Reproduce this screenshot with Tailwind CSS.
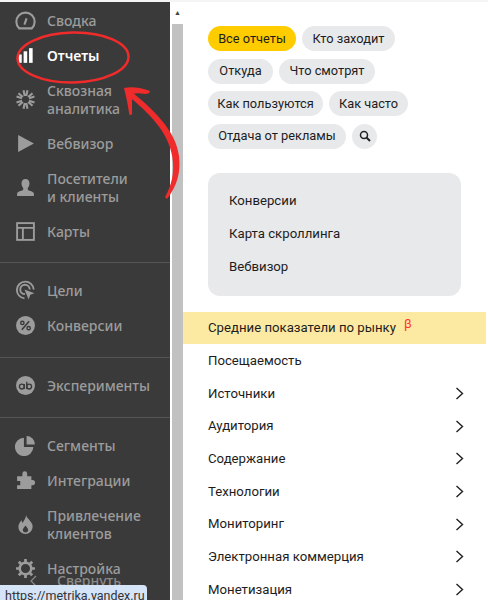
<!DOCTYPE html>
<html lang="ru">
<head>
<meta charset="UTF-8">
<title>Отчеты</title>
<script src="https://cdn.jsdelivr.net/npm/@tailwindcss/browser@4"></script>
</head>
<body class="bg-white">
<div class="relative w-[488px] h-[600px] overflow-hidden flex font-['Roboto',sans-serif] border-t-2 border-[#f4f4f4]">

  <!-- sidebar -->
  <aside class="w-[170px] h-full shrink-0 bg-[#3a3a3a] text-[#9c9c9c] text-[14px] leading-[18px] font-['Noto_Sans',sans-serif] font-medium pt-[1px]">
    <div class="flex items-center h-[35px] pl-[15px] gap-[11px]">
      <svg class="w-[21px] h-[21px]" viewBox="0 0 20 20" fill="none" stroke="#9c9c9c" stroke-width="2"><path d="M4 17.500a8.700 8.700 0 1 1 12 0z"/><path d="M9 14l2-6"/></svg>
      <span>Сводка</span>
    </div>
    <div class="flex items-center h-[35px] pl-[15px] gap-[11px] text-white font-semibold">
      <svg class="w-[21px] h-[21px]" viewBox="0 0 20 20" fill="#fff"><rect x="3" y="9" width="3.400" height="8"/><rect x="8.200" y="6" width="3.400" height="11"/><rect x="13.400" y="3" width="3.400" height="14"/></svg>
      <span>Отчеты</span>
    </div>
    <div class="flex items-center h-[53px] pl-[15px] gap-[11px]">
      <svg class="w-[21px] h-[21px]" viewBox="0 0 20 20" fill="none" stroke="#9c9c9c" stroke-width="2"><path d="M10.730 6.580L11.870 1.200M9.270 6.580L8.130 1.200M13.330 8.920L18.560 7.220M12.600 7.660L16.690 3.980M7.400 7.660L3.310 3.980M6.670 8.920L1.440 7.220M10.730 13.420L11.870 18.800M9.270 13.420L8.130 18.800M13.330 11.080L18.560 12.780M12.600 12.340L16.690 16.020M7.400 12.340L3.310 16.020M6.670 11.080L1.440 12.780"/></svg>
      <span>Сквозная<br>аналитика</span>
    </div>
    <div class="flex items-center h-[35px] pl-[15px] gap-[11px]">
      <svg class="w-[21px] h-[21px]" viewBox="0 0 20 20" fill="#9c9c9c"><path d="M3 2l15 8-15 8z"/></svg>
      <span>Вебвизор</span>
    </div>
    <div class="flex items-center h-[53px] pl-[15px] gap-[11px]">
      <svg class="w-[21px] h-[21px]" viewBox="0 0 20 20" fill="#9c9c9c"><path d="M10 2c2.500 0 3.800 1.800 3.800 4.300 0 1.700-.7 3.300-1.600 4.200v1.800c1.800.8 5.300 1.500 5.800 3.200V18H2v-2.500c.5-1.700 4-2.400 5.800-3.200v-1.800C6.900 9.600 6.200 8 6.200 6.300 6.200 3.800 7.500 2 10 2z"/></svg>
      <span>Посетители<br>и клиенты</span>
    </div>
    <div class="flex items-center h-[35px] pl-[15px] gap-[11px]">
      <svg class="w-[21px] h-[21px]" viewBox="0 0 20 20" fill="none" stroke="#9c9c9c" stroke-width="1.800"><rect x="2" y="2" width="16" height="16"/><path d="M2 6.500h16M7.500 6.500V18"/></svg>
      <span>Карты</span>
    </div>
    <div class="mt-[13px] mb-[10px] h-[1px] bg-[#555]"></div>
    <div class="flex items-center h-[35px] pl-[15px] gap-[11px]">
      <svg class="w-[21px] h-[21px]" viewBox="0 0 20 20" fill="none" stroke="#9c9c9c" stroke-width="1.800"><path d="M9 17.500A8 8 0 1 1 17.800 9"/><path d="M9.500 13.500A4.500 4.500 0 1 1 14 9"/><path d="M9 9l9.500 3.500-4 1.500-1.500 4.500z" fill="#9c9c9c" stroke="none"/></svg>
      <span>Цели</span>
    </div>
    <div class="flex items-center h-[35px] pl-[15px] gap-[11px]">
      <svg class="w-[21px] h-[21px]" viewBox="0 0 20 20"><circle cx="10" cy="10" r="9" fill="#9c9c9c"/><path d="M6.500 14L13.500 6" stroke="#3a3a3a" stroke-width="1.500"/><circle cx="7" cy="7.500" r="1.600" fill="none" stroke="#3a3a3a" stroke-width="1.300"/><circle cx="13" cy="12.500" r="1.600" fill="none" stroke="#3a3a3a" stroke-width="1.300"/></svg>
      <span>Конверсии</span>
    </div>
    <div class="mt-[14px] mb-[10px] h-[1px] bg-[#555]"></div>
    <div class="flex items-center h-[35px] pl-[15px] gap-[11px]">
      <svg class="w-[21px] h-[21px]" viewBox="0 0 20 20"><circle cx="10" cy="10" r="9" fill="#9c9c9c"/><circle cx="6.500" cy="11" r="2.300" fill="none" stroke="#3a3a3a" stroke-width="1.300"/><path d="M8.800 8.500V13.300" stroke="#3a3a3a" stroke-width="1.300"/><circle cx="13.500" cy="11" r="2.300" fill="none" stroke="#3a3a3a" stroke-width="1.300"/><path d="M11.200 6.500V13.300" stroke="#3a3a3a" stroke-width="1.300"/></svg>
      <span>Эксперименты</span>
    </div>
    <div class="mt-[14px] mb-[10px] h-[1px] bg-[#555]"></div>
    <div class="flex items-center h-[35px] pl-[15px] gap-[11px]">
      <svg class="w-[21px] h-[21px]" viewBox="0 0 20 20" fill="#9c9c9c"><path d="M8.500 2.500v9h9A8.800 8.800 0 1 1 8.500 2.500z"/><path d="M11 1a8 8 0 0 1 8 8h-8z"/></svg>
      <span>Сегменты</span>
    </div>
    <div class="flex items-center h-[35px] pl-[15px] gap-[11px]">
      <svg class="w-[21px] h-[21px]" viewBox="0 0 20 20" fill="#9c9c9c"><path d="M2 6h5V3.500a2.300 2.300 0 0 1 4.600 0V6h4v3.500h1a2.500 2.500 0 0 1 0 5h-1V18H2v-3.500h3v-4H2z"/></svg>
      <span>Интеграции</span>
    </div>
    <div class="flex items-center h-[53px] pl-[15px] gap-[11px]">
      <svg class="w-[21px] h-[21px]" viewBox="0 0 20 20" fill="#9c9c9c"><path d="M10.500 1c.5 3 4.500 5 6 9 1.200 4-1.500 9-6.500 9s-7.500-4.500-6.500-8.500c.5-2 1.800-3 2.500-4.500.6 1 .8 2 1.300 2.500C8.500 6 10.500 4 10.500 1zM10 11c-1 1.500-3 3-2.500 5 .4 1 1.500 1.500 2.500 1.500s2.200-.5 2.500-1.500c.4-2-1.500-3.500-2.500-5z"/></svg>
      <span>Привлечение<br>клиентов</span>
    </div>
    <div class="flex items-center h-[35px] pl-[15px] gap-[11px]">
      <svg class="w-[21px] h-[21px]" viewBox="0 0 20 20" fill="none" stroke="#9c9c9c"><circle cx="10" cy="10" r="5.500" stroke-width="2.400"/><path d="M10 1v3M10 16v3M1 10h3M16 10h3M3.600 3.600l2.200 2.200M14.200 14.200l2.200 2.200M16.400 3.600l-2.200 2.200M5.800 14.200l-2.200 2.200" stroke-width="2.600"/></svg>
      <span>Настройка</span>
    </div>
  </aside>

  <!-- scrollbar -->
  <div class="w-[13px] h-full shrink-0 flex flex-col">
    <div class="h-[22px] ml-[2px] flex items-center justify-center text-[7px] text-[#444]">▲</div>
    <div class="flex-1 ml-[2px] mr-0 bg-[#c1c1c1]"></div>
  </div>

  <!-- main column -->
  <main class="flex-1 min-w-0 pt-[24px] text-[#1d1d1d] text-[13.2px] leading-[18px]">
    <div class="pl-[25px] flex flex-col gap-y-[7.670px] text-[12.800px]">
      <div class="flex gap-x-[6px]">
        <span class="w-[88px] h-[25px] flex items-center justify-center rounded-full bg-[#ffcc00] whitespace-nowrap">Все отчеты</span>
        <span class="w-[93px] h-[25px] flex items-center justify-center rounded-full bg-[#e8e9eb] whitespace-nowrap">Кто заходит</span>
      </div>
      <div class="flex gap-x-[6px]">
        <span class="w-[65px] h-[25px] flex items-center justify-center rounded-full bg-[#e8e9eb] whitespace-nowrap">Откуда</span>
        <span class="w-[96px] h-[25px] flex items-center justify-center rounded-full bg-[#e8e9eb] whitespace-nowrap">Что смотрят</span>
      </div>
      <div class="flex gap-x-[6px]">
        <span class="w-[115px] h-[25px] flex items-center justify-center rounded-full bg-[#e8e9eb] whitespace-nowrap">Как пользуются</span>
        <span class="w-[79px] h-[25px] flex items-center justify-center rounded-full bg-[#e8e9eb] whitespace-nowrap">Как часто</span>
      </div>
      <div class="flex gap-x-[6px]">
        <span class="w-[138px] h-[25px] flex items-center justify-center rounded-full bg-[#e8e9eb] whitespace-nowrap">Отдача от рекламы</span>
        <span class="h-[25px] w-[25px] flex items-center justify-center rounded-full bg-[#e8e9eb]">
          <svg class="w-[12px] h-[12px]" viewBox="0 0 12 12" fill="none" stroke="#222" stroke-width="1.500"><circle cx="5" cy="5" r="3.500"/><path d="M7.500 7.500L11 11" stroke-width="2"/></svg>
        </span>
      </div>
    </div>

    <div class="ml-[25px] mt-[24px] w-[253px] h-[123px] rounded-[12px] bg-[#e8e9eb] pl-[21px] pt-[19px] flex flex-col gap-[15px]">
      <span>Конверсии</span>
      <span>Карта скроллинга</span>
      <span>Вебвизор</span>
    </div>

    <div class="mt-[16px] w-[303px] h-[32px] bg-[#fdeaa2] pl-[25px] flex items-center gap-[8px]">
      <span>Средние показатели по рынку</span>
      <span class="text-[#f33] text-[13px] -mt-[8px]">β</span>
    </div>
    <div class="w-[302px] pl-[25px] pr-[21px] mt-[0.5px]">
      <div class="h-[32.700px] flex items-center justify-between"><span>Посещаемость</span></div>
      <div class="h-[32.700px] flex items-center justify-between"><span>Источники</span><svg class="w-[9px] h-[13px]" viewBox="0 0 9 13" fill="none" stroke="#222" stroke-width="1.400"><path d="M1.500 1l6 5.500-6 5.500"/></svg></div>
      <div class="h-[32.700px] flex items-center justify-between"><span>Аудитория</span><svg class="w-[9px] h-[13px]" viewBox="0 0 9 13" fill="none" stroke="#222" stroke-width="1.400"><path d="M1.500 1l6 5.500-6 5.500"/></svg></div>
      <div class="h-[32.700px] flex items-center justify-between"><span>Содержание</span><svg class="w-[9px] h-[13px]" viewBox="0 0 9 13" fill="none" stroke="#222" stroke-width="1.400"><path d="M1.500 1l6 5.500-6 5.500"/></svg></div>
      <div class="h-[32.700px] flex items-center justify-between"><span>Технологии</span><svg class="w-[9px] h-[13px]" viewBox="0 0 9 13" fill="none" stroke="#222" stroke-width="1.400"><path d="M1.500 1l6 5.500-6 5.500"/></svg></div>
      <div class="h-[32.700px] flex items-center justify-between"><span>Мониторинг</span><svg class="w-[9px] h-[13px]" viewBox="0 0 9 13" fill="none" stroke="#222" stroke-width="1.400"><path d="M1.500 1l6 5.500-6 5.500"/></svg></div>
      <div class="h-[32.700px] flex items-center justify-between"><span>Электронная коммерция</span><svg class="w-[9px] h-[13px]" viewBox="0 0 9 13" fill="none" stroke="#222" stroke-width="1.400"><path d="M1.500 1l6 5.500-6 5.500"/></svg></div>
      <div class="h-[32.700px] flex items-center justify-between"><span>Монетизация</span><svg class="w-[9px] h-[13px]" viewBox="0 0 9 13" fill="none" stroke="#222" stroke-width="1.400"><path d="M1.500 1l6 5.500-6 5.500"/></svg></div>
    </div>
  </main>

  <!-- "Свернуть" peeking from under the settings row -->
  <div class="absolute left-[30px] top-[570px] flex items-center gap-[20px] text-[14px] leading-[18px] text-[#8a8a8a] font-['Noto_Sans',sans-serif] font-medium">
    <svg class="w-[7px] h-[12px]" viewBox="0 0 7 12" fill="none" stroke="#8a8a8a" stroke-width="1.200"><path d="M6 1L1 6l5 5"/></svg>
    <span>Свернуть</span>
  </div>

  <!-- browser status tooltip -->
  <div class="absolute left-0 bottom-0 w-[147px] h-[15px] rounded-tr-[4px] bg-[#d6e4f8] text-[#333] text-[12.500px] leading-[14px] pl-[5px] pt-[4px] overflow-hidden whitespace-nowrap">https://metrika.yandex.ru</div>

  <!-- red hand-drawn annotation -->
  <svg class="absolute left-0 -top-[2px] w-[488px] h-[600px] pointer-events-none" viewBox="0 0 488 600" fill="none">
    <ellipse cx="73" cy="57.500" rx="55.500" ry="25" stroke="#f02b2b" stroke-width="2.500" transform="rotate(-1 73 57.500)"/>
    <path d="M167 199C177 186 181 172 179 156C176 130 152 108 128 89L127 95C148 112 169 132 172.500 158C174.500 172 172 185 165 197Z" fill="#f02b2b"/>
    <path d="M124 88C132 86 142 88 150 91C150 93 148 94 145 94C140 93 136 93 132 94L132 114C131 116 129 115 129 113C128 105 126 96 124 88Z" fill="#f02b2b"/>
  </svg>
</div>
</body>
</html>
